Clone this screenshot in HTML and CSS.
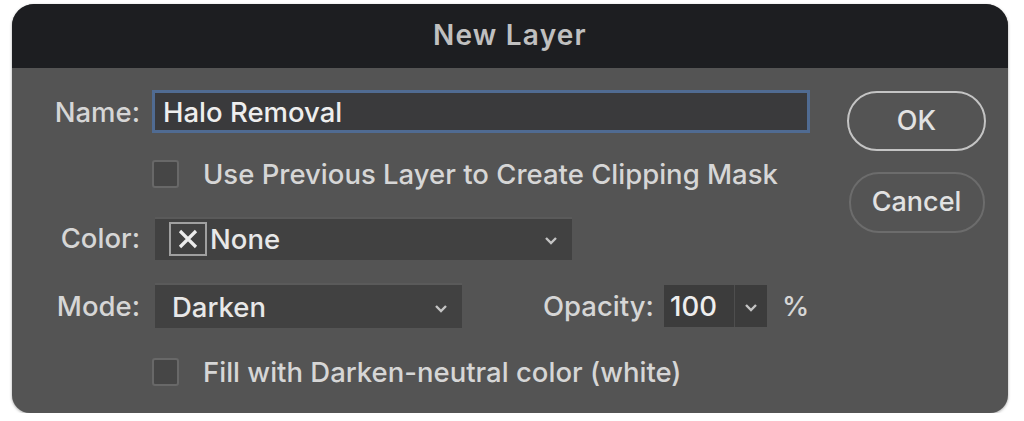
FILE: index.html
```html
<!DOCTYPE html>
<html>
    <head>
        <meta charset="utf-8">
        <title>New Layer</title>
        <link rel="stylesheet" href="styles.css">
    </head>
    <body>
        <div id="dialog">
            <div id="titlebar">New Layer</div>
            <div id="content">
                <div id="form">
                    <label class="fieldLabel" for="layerName">Name:</label>
                    <div class="nameBox" id="layerName">Halo Removal</div>

                    <div class="checkRow">
                        <span class="check"></span>
                        <span>Use Previous Layer to Create Clipping Mask</span>
                    </div>

                    <span class="fieldLabel">Color:</span>
                    <div class="select colorSelect">
                        <span class="noneSwatch">
                            <svg width="24" height="22" viewBox="0 0 24 22"><path d="M4 3 L20 19 M20 3 L4 19" stroke="#ececec" stroke-width="3.2" fill="none"/></svg>
                        </span>
                        <span class="selectText">None</span>
                        <svg class="chevron" width="14" height="9" viewBox="0 0 14 9"><polyline points="2,2 7,7 12,2" stroke="#c4c4c4" stroke-width="2.4" fill="none"/></svg>
                    </div>

                    <span class="fieldLabel">Mode:</span>
                    <div class="modeRow">
                        <div class="select modeSelect">
                            <span class="selectText">Darken</span>
                            <svg class="chevron" width="14" height="9" viewBox="0 0 14 9"><polyline points="2,2 7,7 12,2" stroke="#c4c4c4" stroke-width="2.4" fill="none"/></svg>
                        </div>
                        <span class="opacityLabel">Opacity:</span>
                        <div class="opacityBox">
                            <span class="opacityValue">100</span>
                            <span class="opacityArrow">
                                <svg width="14" height="9" viewBox="0 0 14 9"><polyline points="2,2 7,7 12,2" stroke="#c4c4c4" stroke-width="2.4" fill="none"/></svg>
                            </span>
                        </div>
                        <span class="percent">%</span>
                    </div>

                    <div class="checkRow">
                        <span class="check"></span>
                        <span>Fill with Darken-neutral color (white)</span>
                    </div>
                </div>
                <div id="actions">
                    <button class="btn okBtn">OK</button>
                    <button class="btn cancelBtn">Cancel</button>
                </div>
            </div>
        </div>
    </body>
</html>
```

FILE: styles.css
```css
body {
    margin: 0;
    background-color: white;
    font-family: Inter, "Liberation Sans", Arial, sans-serif;
}

#dialog {
    margin: 4px 0 0 12px;
    width: 996px;
    height: 409px;
    background-color: rgb(84, 84, 84);
    border-radius: 22px 22px 18px 18px;
    overflow: hidden;
    box-shadow: 0 1px 3px rgba(0, 0, 0, 0.35);
    color: rgb(214, 214, 214);
    font-size: 27.5px;
    font-weight: 500;
}

#titlebar {
    height: 64px;
    display: flex;
    align-items: center;
    justify-content: center;
    background-color: rgb(29, 30, 33);
    color: rgb(192, 192, 192);
    font-weight: 600;
    font-size: 28px;
    letter-spacing: 1.2px;
    padding-bottom: 2px;
    box-sizing: border-box;
}

#content {
    display: flex;
    padding: 12px 22px 0 0;
}

#form {
    display: grid;
    grid-template-columns: 128px 658px;
    grid-template-rows: 63px 61px 68px 67px 66px;
    column-gap: 12px;
    align-items: center;
}

.fieldLabel {
    text-align: right;
}

.nameBox {
    height: 43px;
    box-sizing: border-box;
    border: 3px solid rgb(80, 107, 146);
    background-color: rgb(58, 58, 60);
    color: rgb(238, 238, 238);
    padding-left: 8px;
    display: flex;
    align-items: center;
}

.checkRow {
    grid-column: 2;
    display: flex;
    align-items: center;
    gap: 24px;
}

.check {
    width: 27px;
    height: 28px;
    box-sizing: border-box;
    border: 2px solid rgb(104, 104, 104);
    background-color: rgb(70, 70, 70);
    border-radius: 3px;
}

.select {
    height: 43px;
    box-sizing: border-box;
    margin-left: 3px;
    background-color: rgb(65, 65, 65);
    border-top: 2px solid rgb(90, 90, 90);
    display: flex;
    align-items: center;
    padding: 0 14px 0 14px;
    color: rgb(232, 232, 232);
}

.colorSelect {
    width: 417px;
}

.modeSelect {
    width: 307px;
    height: 45px;
    padding-left: 17px;
}

.noneSwatch {
    width: 38px;
    height: 34px;
    box-sizing: border-box;
    border: 2px solid rgb(160, 160, 160);
    display: flex;
    align-items: center;
    justify-content: center;
    margin-right: 3px;
}

.selectText {
    flex: 1;
}

.chevron {
    margin-top: 3px;
}

.modeRow {
    display: flex;
    align-items: center;
}

.opacityLabel {
    margin-left: 81px;
    width: 121px;
}

.opacityBox {
    display: flex;
    height: 42px;
    background-color: rgb(60, 60, 60);
    color: rgb(238, 238, 238);
}

.opacityValue {
    width: 71px;
    box-sizing: border-box;
    padding-left: 6px;
    display: flex;
    align-items: center;
    border-right: 1px solid rgb(78, 78, 78);
}

.opacityArrow {
    width: 32px;
    display: flex;
    align-items: center;
    justify-content: center;
    padding-top: 3px;
}

.percent {
    margin-left: 15px;
}

#actions {
    margin-left: auto;
    width: 139px;
    padding-top: 11px;
    display: flex;
    flex-direction: column;
    align-items: center;
    gap: 21px;
}

.btn {
    width: 139px;
    height: 60px;
    border-radius: 30px;
    background-color: transparent;
    font-family: Inter, "Liberation Sans", Arial, sans-serif;
    font-size: 27px;
    font-weight: 500;
    color: rgb(226, 226, 226);
    padding: 0 0 2px 0;
}

.okBtn {
    border: 2px solid rgb(196, 196, 196);
}

.cancelBtn {
    width: 136px;
    height: 61px;
    border: 2px solid rgb(108, 108, 108);
}
```
